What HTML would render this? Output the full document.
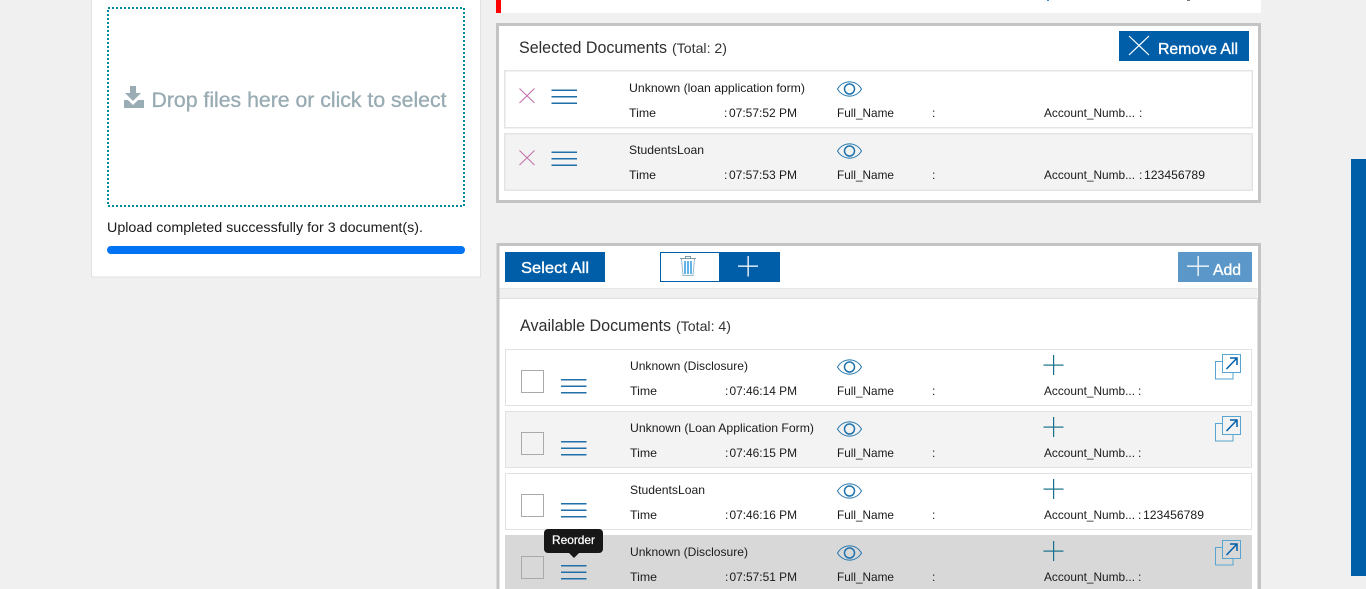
<!DOCTYPE html>
<html lang="en">
<head>
<meta charset="utf-8">
<title>Documents</title>
<style>
html,body{margin:0;padding:0;width:1366px;height:589px;overflow:hidden;background:#f0f0f0}
svg{display:block}
text{font-family:"Liberation Sans",Arial,sans-serif;font-size:12px;fill:#1a1a1a}
.w{fill:#fff;font-size:16px;stroke:#fff;stroke-width:.35px}
.h{font-size:16.5px;fill:#2e2e2e}
.t{font-size:14px;fill:#333}
</style>
</head>
<body>
<svg width="1366" height="589" viewBox="0 0 1366 589" xmlns="http://www.w3.org/2000/svg">
<defs>
  <g id="eye" fill="none" stroke="#1f73ad">
    <path d="M0.5 8C6 -1.5 19 -1.5 24.500 8C19 17.500 6 17.500 0.5 8Z" stroke-width="1"/>
    <circle cx="12.500" cy="8" r="5" stroke-width="1.500"/>
  </g>
  <g id="ham" fill="#1f6fa9">
    <rect x="0" y="0" width="25.500" height="1.500"/>
    <rect x="0" y="6.500" width="25.500" height="1.500"/>
    <rect x="0" y="13" width="25.500" height="1.500"/>
  </g>
  <g id="x" fill="none" stroke="#c272ab" stroke-width="1.100">
    <path d="M0.5 0.5L15.500 15M15.500 0.5L0.5 15"/>
  </g>
  <g id="plus" fill="#16708a">
    <rect x="0" y="9.500" width="20" height="1.200"/>
    <rect x="9.500" y="0" width="1.200" height="20"/>
  </g>
  <g id="ext">
    <rect x="0.5" y="7.500" width="17.500" height="17.500" fill="currentColor" stroke="#58a6d0" stroke-width="1"/>
    <rect x="7.500" y="0.5" width="18" height="18" fill="currentColor" stroke="#58a6d0" stroke-width="1"/>
    <path d="M11.500 15L22 4M15 4H22V11" fill="none" stroke="#005ea8" stroke-width="1.500"/>
  </g>
</defs>

<!-- page background -->
<rect width="1366" height="589" fill="#f0f0f0"/>

<!-- left card -->
<rect x="91.500" y="-2" width="389" height="279" fill="#fff" stroke="#e2e2e2" stroke-width="1"/>
<rect x="108" y="8" width="356" height="198" fill="#fff" stroke="#00889f" stroke-width="2" stroke-dasharray="2 2"/>
<path d="M130 86h6v7h5l-8 8-8-8h5z" fill="#9aadb5"/>
<path d="M124 100h4l5 5 5-5h6v8h-20z" fill="#9aadb5"/>
<text x="151.500" y="107" style="font-size:21px;fill:#98abb3;stroke:#98abb3;stroke-width:.3px" textLength="295" lengthAdjust="spacingAndGlyphs">Drop files here or click to select</text>
<text x="107" y="232" style="font-size:14px" textLength="316" lengthAdjust="spacingAndGlyphs">Upload completed successfully for 3 document(s).</text>
<rect x="107" y="246" width="358" height="8" rx="4" fill="#0073f5"/>

<!-- top strip -->
<rect x="496" y="0" width="765" height="13" fill="#fff"/>
<rect x="496" y="0" width="5" height="13" fill="#f00"/>
<rect x="1047" y="0" width="2" height="1" fill="#3a8ac0"/>
<rect x="1187" y="0" width="3" height="1" fill="#777"/>

<!-- selected panel -->
<rect x="497.500" y="24.500" width="762" height="177" fill="#fff" stroke="#c4c4c4" stroke-width="3"/>
<text class="h" x="519" y="53" textLength="148" lengthAdjust="spacingAndGlyphs">Selected Documents</text>
<text class="t" x="672" y="53" textLength="55" lengthAdjust="spacingAndGlyphs">(Total: 2)</text>
<rect x="1119" y="31" width="130" height="30" fill="#005ea8"/>
<path d="M1129 36L1149 55M1149 36L1129 55" stroke="#fff" stroke-width="1.200" fill="none"/>
<text class="w" x="1158" y="54" textLength="80" lengthAdjust="spacingAndGlyphs">Remove All</text>

<rect x="504.750" y="70.750" width="747.500" height="57" fill="#fff" stroke="#e4e4e4" stroke-width="1.500"/>
<use href="#x" x="519" y="88"/>
<use href="#ham" x="551.500" y="89.500"/>
<text x="629" y="92" textLength="176" lengthAdjust="spacingAndGlyphs">Unknown (loan application form)</text>
<use href="#eye" x="837" y="81"/>
<text x="629" y="117" textLength="27" lengthAdjust="spacingAndGlyphs">Time</text>
<text x="724" y="117">:</text>
<text x="729" y="117" textLength="68" lengthAdjust="spacingAndGlyphs">07:57:52 PM</text>
<text x="837" y="117" textLength="57" lengthAdjust="spacingAndGlyphs">Full_Name</text>
<text x="932" y="117">:</text>
<text x="1044" y="117" textLength="91" lengthAdjust="spacingAndGlyphs">Account_Numb...</text>
<text x="1139" y="117">:</text>

<rect x="504.750" y="133.750" width="747.500" height="56.500" fill="#f3f3f3" stroke="#e4e4e4" stroke-width="1.500"/>
<use href="#x" x="519" y="150"/>
<use href="#ham" x="551.500" y="151.500"/>
<text x="629" y="154" textLength="75" lengthAdjust="spacingAndGlyphs">StudentsLoan</text>
<use href="#eye" x="837" y="143"/>
<text x="629" y="179" textLength="27" lengthAdjust="spacingAndGlyphs">Time</text>
<text x="724" y="179">:</text>
<text x="729" y="179" textLength="68" lengthAdjust="spacingAndGlyphs">07:57:53 PM</text>
<text x="837" y="179" textLength="57" lengthAdjust="spacingAndGlyphs">Full_Name</text>
<text x="932" y="179">:</text>
<text x="1044" y="179" textLength="91" lengthAdjust="spacingAndGlyphs">Account_Numb...</text>
<text x="1139" y="179">:</text>
<text x="1144" y="179" textLength="61" lengthAdjust="spacingAndGlyphs">123456789</text>

<!-- available panel -->
<rect x="498" y="244.500" width="761.500" height="360" fill="#fff" stroke="#c4c4c4" stroke-width="3"/>
<rect x="499.500" y="288" width="758" height="10" fill="#f0f0f0"/>
<rect x="499.500" y="288" width="758" height="1" fill="#e6e6e6"/>
<rect x="499.500" y="298" width="758" height="1" fill="#dedede"/>
<rect x="1257" y="298" width="1" height="291" fill="#e0e0e0"/>

<rect x="505" y="252" width="100" height="30" fill="#005ea8"/>
<text class="w" x="521" y="273" textLength="68" lengthAdjust="spacingAndGlyphs">Select All</text>

<rect x="660.500" y="252.500" width="119" height="29" fill="#fff" stroke="#005ea8" stroke-width="1"/>
<rect x="719" y="252" width="61" height="30" fill="#005ea8"/>
<g fill="none" stroke-width="1">
  <path d="M680 258.500H696" stroke="#7f98a8"/>
  <path d="M685.500 258V256.500H690.500V258" stroke="#7f98a8"/>
  <path d="M681.500 259L683 275.500H693L694.500 259" stroke="#9ab8cc"/>
  <path d="M685 261V274M688 261V274M691 261V274" stroke="#2f9be0" stroke-width="1.500"/>
</g>
<rect x="738" y="265.500" width="20" height="1.300" fill="#fff"/>
<rect x="747.500" y="256" width="1.300" height="20.500" fill="#fff"/>

<rect x="1178" y="252" width="74" height="30" fill="#5b97c8"/>
<rect x="1187" y="265.500" width="22" height="1.300" fill="#fff"/>
<rect x="1197.500" y="256" width="1.300" height="20" fill="#fff"/>
<text class="w" x="1213" y="275" textLength="28" lengthAdjust="spacingAndGlyphs">Add</text>

<text class="h" x="520" y="331" textLength="151" lengthAdjust="spacingAndGlyphs">Available Documents</text>
<text class="t" x="676" y="331" textLength="55" lengthAdjust="spacingAndGlyphs">(Total: 4)</text>

<!-- row 1 -->
<rect x="505.500" y="349.500" width="746" height="56" fill="#fff" stroke="#e2e2e2" stroke-width="1"/>
<rect x="521.500" y="370.500" width="22" height="22" fill="none" stroke="#aaa" stroke-width="1"/>
<use href="#ham" x="561" y="379"/>
<text x="630" y="370" textLength="118" lengthAdjust="spacingAndGlyphs">Unknown (Disclosure)</text>
<use href="#eye" x="837" y="359"/>
<use href="#plus" x="1043.500" y="355"/>
<use href="#ext" x="1215" y="354" style="color:#fff"/>
<text x="630" y="395" textLength="27" lengthAdjust="spacingAndGlyphs">Time</text>
<text x="725" y="395">:</text>
<text x="729.500" y="395" textLength="67.500" lengthAdjust="spacingAndGlyphs">07:46:14 PM</text>
<text x="837" y="395" textLength="57" lengthAdjust="spacingAndGlyphs">Full_Name</text>
<text x="932" y="395">:</text>
<text x="1044" y="395" textLength="91" lengthAdjust="spacingAndGlyphs">Account_Numb...</text>
<text x="1138" y="395">:</text>

<!-- row 2 -->
<rect x="505.500" y="411.500" width="746" height="56" fill="#f3f3f3" stroke="#e2e2e2" stroke-width="1"/>
<rect x="521.500" y="432.500" width="22" height="22" fill="none" stroke="#aaa" stroke-width="1"/>
<use href="#ham" x="561" y="441"/>
<text x="630" y="432" textLength="184" lengthAdjust="spacingAndGlyphs">Unknown (Loan Application Form)</text>
<use href="#eye" x="837" y="421"/>
<use href="#plus" x="1043.500" y="417"/>
<use href="#ext" x="1215" y="416" style="color:#f3f3f3"/>
<text x="630" y="457" textLength="27" lengthAdjust="spacingAndGlyphs">Time</text>
<text x="725" y="457">:</text>
<text x="729.500" y="457" textLength="67.500" lengthAdjust="spacingAndGlyphs">07:46:15 PM</text>
<text x="837" y="457" textLength="57" lengthAdjust="spacingAndGlyphs">Full_Name</text>
<text x="932" y="457">:</text>
<text x="1044" y="457" textLength="91" lengthAdjust="spacingAndGlyphs">Account_Numb...</text>
<text x="1138" y="457">:</text>

<!-- row 3 -->
<rect x="505.500" y="473.500" width="746" height="56" fill="#fff" stroke="#e2e2e2" stroke-width="1"/>
<rect x="521.500" y="494.500" width="22" height="22" fill="none" stroke="#aaa" stroke-width="1"/>
<use href="#ham" x="561" y="503"/>
<text x="630" y="494" textLength="75" lengthAdjust="spacingAndGlyphs">StudentsLoan</text>
<use href="#eye" x="837" y="483"/>
<use href="#plus" x="1043.500" y="479"/>
<text x="630" y="519" textLength="27" lengthAdjust="spacingAndGlyphs">Time</text>
<text x="725" y="519">:</text>
<text x="729.500" y="519" textLength="67.500" lengthAdjust="spacingAndGlyphs">07:46:16 PM</text>
<text x="837" y="519" textLength="57" lengthAdjust="spacingAndGlyphs">Full_Name</text>
<text x="932" y="519">:</text>
<text x="1044" y="519" textLength="91" lengthAdjust="spacingAndGlyphs">Account_Numb...</text>
<text x="1138" y="519">:</text>
<text x="1143" y="519" textLength="61" lengthAdjust="spacingAndGlyphs">123456789</text>

<!-- row 4 -->
<rect x="505" y="535" width="747" height="60" fill="#d8d8d8"/>
<rect x="521.500" y="556.500" width="22" height="22" fill="none" stroke="#aaa" stroke-width="1"/>
<use href="#ham" x="561" y="565"/>
<text x="630" y="556" textLength="118" lengthAdjust="spacingAndGlyphs">Unknown (Disclosure)</text>
<use href="#eye" x="837" y="545"/>
<use href="#plus" x="1043.500" y="541"/>
<use href="#ext" x="1215" y="540" style="color:#d8d8d8"/>
<text x="630" y="581" textLength="27" lengthAdjust="spacingAndGlyphs">Time</text>
<text x="725" y="581">:</text>
<text x="729.500" y="581" textLength="67.500" lengthAdjust="spacingAndGlyphs">07:57:51 PM</text>
<text x="837" y="581" textLength="57" lengthAdjust="spacingAndGlyphs">Full_Name</text>
<text x="932" y="581">:</text>
<text x="1044" y="581" textLength="91" lengthAdjust="spacingAndGlyphs">Account_Numb...</text>
<text x="1138" y="581">:</text>

<!-- tooltip -->
<rect x="544" y="529" width="59" height="24" rx="4" fill="#171717"/>
<path d="M569 553H579L574 558Z" fill="#171717"/>
<text x="552" y="544" style="fill:#fff;font-size:12px;stroke:#fff;stroke-width:.25px" textLength="43" lengthAdjust="spacingAndGlyphs">Reorder</text>

<!-- right bar -->
<rect x="1351" y="159" width="15" height="417" fill="#005ea8"/>
</svg>
</body>
</html>
